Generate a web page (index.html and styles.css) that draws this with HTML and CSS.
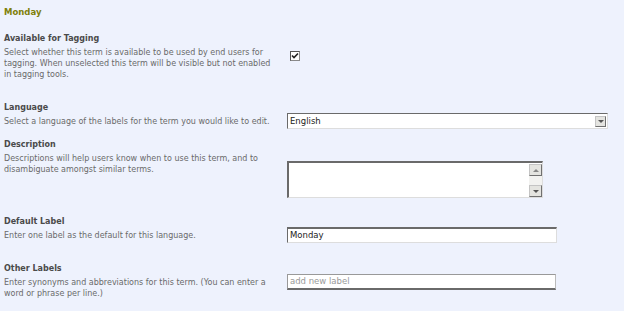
FILE: index.html
```html
<!DOCTYPE html>
<html lang="en">
<head>
<meta charset="UTF-8">
<title>Term Properties</title>
<link rel="stylesheet" href="styles.css">
</head>
<body>
    <div class="page">
        <h2 class="term-name">Monday</h2>

        <div class="section sec-tagging">
            <div class="info">
                <h3>Available for Tagging</h3>
                <p>Select whether this term is available to be used by end users for tagging. When unselected this term will be visible but not enabled in tagging tools.</p>
            </div>
            <div class="field">
                <span class="checkbox">
                    <svg width="8" height="8" viewBox="0 0 8 8"><path d="M1 3.5 L3 5.5 L7 1.5" fill="none" stroke="#222" stroke-width="1.6"/></svg>
                </span>
            </div>
        </div>

        <div class="section sec-language">
            <div class="info">
                <h3>Language</h3>
                <p>Select a language of the labels for the term you would like to edit.</p>
            </div>
            <div class="field">
                <div class="select">
                    <span class="select-text">English</span>
                    <span class="btn"><span class="arrow-down"></span></span>
                </div>
            </div>
        </div>

        <div class="section sec-description">
            <div class="info">
                <h3>Description</h3>
                <p>Descriptions will help users know when to use this term, and to disambiguate amongst similar terms.</p>
            </div>
            <div class="field">
                <div class="textarea">
                    <div class="scrollbar">
                        <span class="btn"><span class="arrow-up"></span></span>
                        <span class="track"></span>
                        <span class="btn"><span class="arrow-down"></span></span>
                    </div>
                </div>
            </div>
        </div>

        <div class="section sec-default">
            <div class="info">
                <h3>Default Label</h3>
                <p>Enter one label as the default for this language.</p>
            </div>
            <div class="field">
                <div class="textbox">Monday</div>
            </div>
        </div>

        <div class="section sec-other">
            <div class="info">
                <h3>Other Labels</h3>
                <p>Enter synonyms and abbreviations for this term. (You can enter a word or phrase per line.)</p>
            </div>
            <div class="field">
                <div class="textbox placeholder">add new label</div>
            </div>
        </div>
    </div>
</body>
</html>
```

FILE: styles.css
```css
body {
    margin: 0;
    background-color: #eef2fd;
    font-family: "DejaVu Sans", Verdana, sans-serif;
    font-size: 8px;
}
.page {
    padding: 0 4px;
}
.term-name {
    margin: 7px 0 0;
    font-size: 8.5px;
    line-height: 11px;
    font-weight: bold;
    color: #80800a;
}
.section {
    display: flex;
}
.info {
    width: 272px;
}
.info h3 {
    margin: 0 0 3px;
    font-size: 8px;
    line-height: 11px;
    font-weight: bold;
    color: #4a4a4a;
}
.info p {
    margin: 0;
    line-height: 11px;
    color: #6a6a6a;
}
.field {
    margin-left: 11px;
}
.sec-tagging {
    margin-top: 15px;
    margin-bottom: 22px;
}
.sec-tagging .field {
    padding-top: 18px;
    padding-left: 3px;
}
.sec-language {
    margin-bottom: 10px;
}
.sec-language .field {
    padding-top: 11px;
}
.sec-description {
    margin-bottom: 18px;
}
.sec-description .field {
    padding-top: 22px;
}
.sec-default {
    margin-bottom: 20px;
}
.sec-default .field {
    padding-top: 11px;
}
.sec-other .field {
    padding-top: 11px;
}
.checkbox {
    display: flex;
    align-items: center;
    justify-content: center;
    width: 8px;
    height: 8px;
    background: #fff;
    border: 1px solid #8a8a8a;
    border-top-color: #555;
    border-left-color: #555;
}
.select {
    display: flex;
    align-items: center;
    width: 319px;
    height: 14px;
    background: #fff;
    border: 1px solid #ddd;
    border-top-color: #6a6a6a;
    border-left-color: #6a6a6a;
    color: #222;
}
.select-text {
    flex: 1;
    padding-left: 2px;
    font-size: 8.5px;
}
.btn {
    display: flex;
    align-items: center;
    justify-content: center;
    width: 11px;
    height: 11px;
    margin-right: 1px;
    background: #e4e4e0;
    border: 1px solid #c4c4c4;
    border-right-color: #707070;
    border-bottom-color: #707070;
    box-sizing: border-box;
}
.arrow-down {
    width: 0;
    height: 0;
    border-left: 3px solid transparent;
    border-right: 3px solid transparent;
    border-top: 3px solid #555;
}
.arrow-up {
    width: 0;
    height: 0;
    border-left: 3px solid transparent;
    border-right: 3px solid transparent;
    border-bottom: 3px solid #888;
}
.textarea {
    display: flex;
    justify-content: flex-end;
    width: 253px;
    height: 34px;
    background: #fff;
    border: 1px solid #ddd;
    border-top: 2px solid #6a6a6a;
    border-left: 2px solid #6a6a6a;
}
.scrollbar {
    display: flex;
    flex-direction: column;
    width: 13px;
    padding-top: 1px;
}
.scrollbar .btn {
    width: 13px;
    height: 12px;
    margin: 0;
}
.scrollbar .track {
    flex: 1;
    background: #f2f2f0;
}
.textbox {
    width: 266px;
    height: 13px;
    padding-left: 2px;
    background: #fff;
    border: 1px solid #ddd;
    border-top: 2px solid #6a6a6a;
    border-left: 1px solid #6a6a6a;
    font-size: 8.5px;
    line-height: 13px;
    color: #222;
}
.textbox.placeholder {
    width: 265px;
    height: 13px;
    border: 1px solid #999;
    border-bottom: 2px solid #6a6a6a;
    border-right-color: #bbb;
    color: #999;
}
```
